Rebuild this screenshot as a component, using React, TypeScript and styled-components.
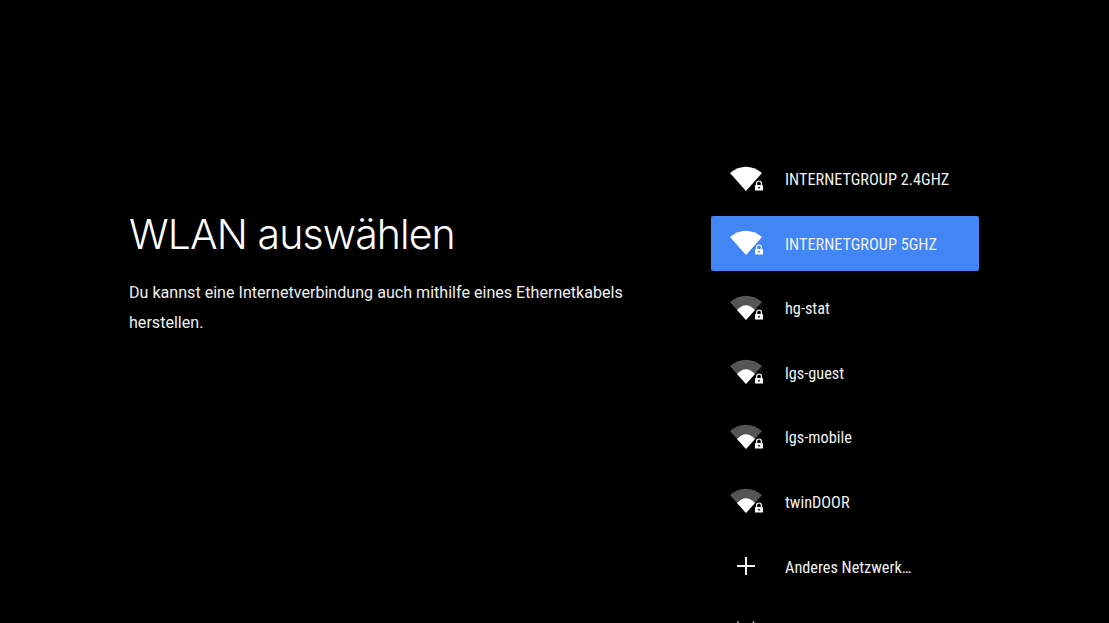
import styled, { createGlobalStyle } from "styled-components";

const GlobalStyle = createGlobalStyle`
  html, body {
    margin: 0;
    background: #000;
  }
`;

const Screen = styled.main`
  display: flex;
  width: 1109px;
  height: 623px;
  overflow: hidden;
  background: #000;
  color: #fff;
  font-family: Roboto, "Liberation Sans", sans-serif;
`;

const Intro = styled.section`
  flex: none;
  width: 711px;
  padding: 208px 0 0 129px;
  box-sizing: border-box;
`;

const Title = styled.h1`
  margin: 0;
  font-family: Inter, Roboto, sans-serif;
  font-size: 41px;
  font-weight: 300;
  letter-spacing: -0.9px;
  line-height: 52px;
`;

const Description = styled.p`
  margin: 18px 0 0;
  width: 510px;
  font-size: 16.1px;
  line-height: 30px;
  color: #eee;
`;

const NetworkList = styled.ul`
  display: flex;
  flex-direction: column;
  gap: 9.6px;
  width: 268px;
  margin: 0;
  padding: 151px 0 0;
  list-style: none;
`;

const NetworkRow = styled.li<{ $selected?: boolean }>`
  display: flex;
  flex: none;
  align-items: center;
  gap: 21px;
  height: 55px;
  padding-left: 17px;
  border-radius: 2px;
  background: ${(p) => (p.$selected ? "#4285f4" : "transparent")};
`;

const NetworkName = styled.span`
  padding-top: 2px;
  font-size: 16.3px;
  font-stretch: condensed;
  color: #f0f0f0;
  white-space: nowrap;
`;

const Glyph = styled.svg`
  flex: none;
  display: block;
`;

const WifiIcon = ({ weak, hole }: { weak?: boolean; hole: string }) => (
  <Glyph width="36" height="28" viewBox="0 0 36 28">
    {weak ? (
      <>
        <path d="M2 8Q18 -4.5 34 8L18 26Z" fill="#555" />
        <path d="M9 15.9Q18 6.5 27 15.9L18 26Z" fill="#fff" />
      </>
    ) : (
      <path d="M2 8Q18 -4.5 34 8L18 26Z" fill="#fff" />
    )}
    <path d="M28.6 20v-1.6a2.4 2.4 0 0 1 4.8 0V20" fill="none" stroke="#fff" strokeWidth="1.2" />
    <rect x="27" y="20" width="8" height="5.5" rx="0.6" fill="#fff" />
    <circle cx="31" cy="22.7" r="0.9" fill={hole} />
  </Glyph>
);

const PlusIcon = () => (
  <Glyph width="36" height="28" viewBox="0 0 36 28">
    <path d="M18 5V23M9 14H27" stroke="#f4f4f4" strokeWidth="2" />
  </Glyph>
);

// only the top of this icon shows above the bottom edge of the screen
const ClippedIcon = () => (
  <Glyph width="36" height="28" viewBox="0 0 36 28">
    <path d="M10 4.5V10M25.5 4.5V10" stroke="#ccc" strokeWidth="1.5" />
  </Glyph>
);

const networks = [
  { name: "INTERNETGROUP 2.4GHZ" },
  { name: "INTERNETGROUP 5GHZ", selected: true },
  { name: "hg-stat", weak: true },
  { name: "lgs-guest", weak: true },
  { name: "lgs-mobile", weak: true },
  { name: "twinDOOR", weak: true },
];

export default function App() {
  return (
    <Screen>
      <GlobalStyle />
      <Intro>
        <Title>WLAN auswählen</Title>
        <Description>
          Du kannst eine Internetverbindung auch mithilfe eines Ethernetkabels herstellen.
        </Description>
      </Intro>
      <NetworkList>
        {networks.map((n) => (
          <NetworkRow key={n.name} $selected={n.selected}>
            <WifiIcon weak={n.weak} hole={n.selected ? "#4285f4" : "#000"} />
            <NetworkName>{n.name}</NetworkName>
          </NetworkRow>
        ))}
        <NetworkRow>
          <PlusIcon />
          <NetworkName>Anderes Netzwerk…</NetworkName>
        </NetworkRow>
        <NetworkRow>
          <ClippedIcon />
        </NetworkRow>
      </NetworkList>
    </Screen>
  );
}
